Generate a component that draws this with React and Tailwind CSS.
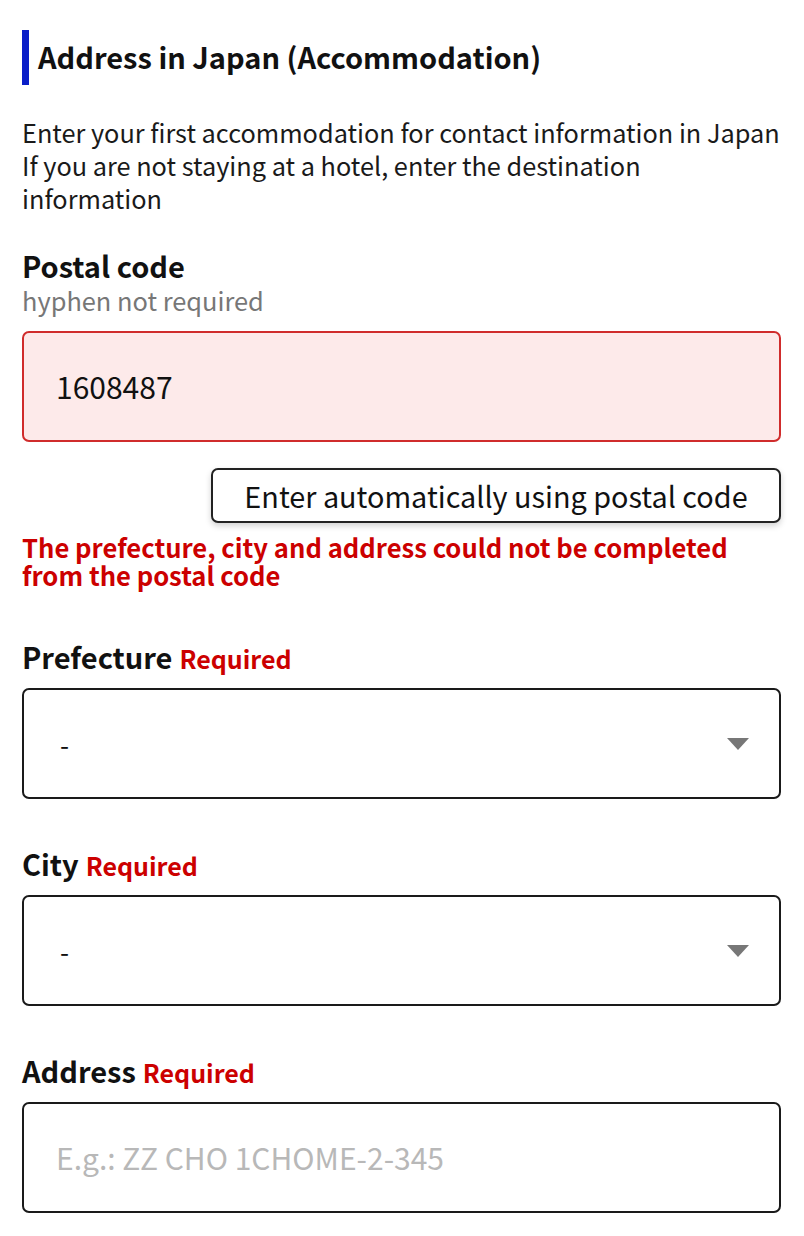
import React from "react";

const font = { fontFamily: '"Noto Sans CJK KR", "Noto Sans", sans-serif' };

function Label({ text, required }) {
  return (
    <div className="flex items-baseline gap-[7px] leading-[36px] whitespace-nowrap">
      <span className="text-[29px] font-bold text-[#111]">{text}</span>
      {required && <span className="text-[25px] font-bold text-[#cc0000]">Required</span>}
    </div>
  );
}

function Select() {
  return (
    <div className="mt-[12px] h-[111px] rounded-[7px] border-2 border-[#1a1a1a] bg-white flex items-center justify-between pl-[36px] pr-[30px]">
      <span className="text-[26px] text-[#111]">-</span>
      <svg width="22" height="12" viewBox="0 0 22 12">
        <polygon points="0,0 22,0 11,12" fill="#777" />
      </svg>
    </div>
  );
}

export default function App() {
  return (
    <div className="bg-white min-h-[1236px] pl-[22px] pr-[23px] pt-[30px] pb-[24px]" style={font}>
      <div className="flex items-center h-[55px]">
        <div className="w-[7px] h-[55px] bg-[#0a1ec8]" />
        <h1 className="ml-[9px] mb-[4px] text-[29px] font-bold text-[#111] leading-[36px] whitespace-nowrap">
          Address in Japan (Accommodation)
        </h1>
      </div>
      <div className="mt-[31px] text-[25.3px] leading-[33px] text-[#1a1a1a] whitespace-nowrap">
        <div>Enter your first accommodation for contact information in Japan</div>
        <div>If you are not staying at a hotel, enter the destination</div>
        <div>information</div>
      </div>

      <div className="mt-[32px]">
        <Label text="Postal code" />
        <div className="mt-[1px] text-[25.4px] leading-[33px] text-[#777]">hyphen not required</div>
        <div className="mt-[14px] h-[111px] rounded-[7px] border-2 border-[#d02c2c] bg-[#fdeaea] flex items-center pl-[32px]">
          <span className="text-[30px] text-[#111]">1608487</span>
        </div>
        <div className="mt-[26px] flex justify-end">
          <button className="w-[570px] h-[55px] rounded-[7px] border-2 border-[#222] bg-white text-[28.8px] leading-[36px] text-[#111] shadow-[0_3px_6px_rgba(0,0,0,0.18)] whitespace-nowrap">
            Enter automatically using postal code
          </button>
        </div>
        <div className="mt-[10px] text-[25.6px] leading-[28px] font-bold text-[#cc0000] whitespace-nowrap">
          <div>The prefecture, city and address could not be completed</div>
          <div>from the postal code</div>
        </div>
      </div>

      <div className="mt-[49px]">
        <Label text="Prefecture" required />
        <Select />
      </div>

      <div className="mt-[46px]">
        <Label text="City" required />
        <Select />
      </div>

      <div className="mt-[46px]">
        <Label text="Address" required />
        <div className="mt-[12px] h-[111px] rounded-[7px] border-2 border-[#1a1a1a] bg-white flex items-center pl-[32px]">
          <span className="text-[30px] text-[#b8b8b8]">E.g.: ZZ CHO 1CHOME-2-345</span>
        </div>
      </div>
    </div>
  );
}
